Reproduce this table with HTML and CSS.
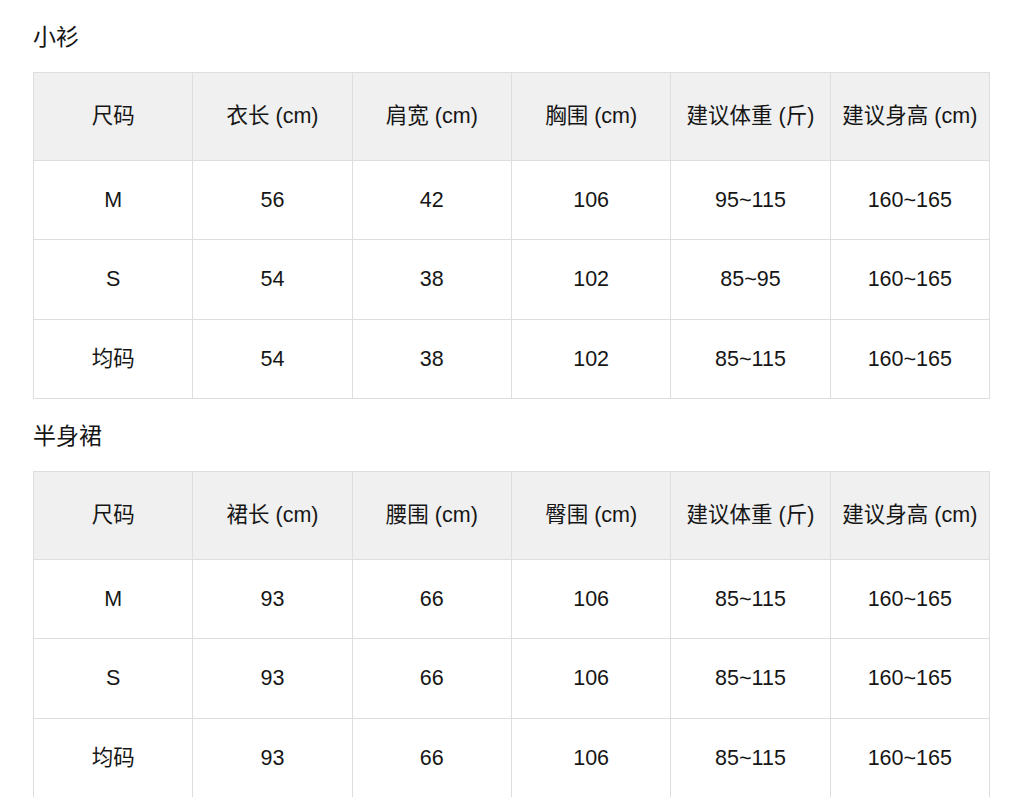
FILE: index.html
```html
<!DOCTYPE html>
<html lang="zh">
<head>
<meta charset="utf-8">
<link rel="stylesheet" href="styles.css">
</head>
<body>
<div class="page">
  <h2 class="title">小衫</h2>
  <table class="size-table">
    <thead>
      <tr><th>尺码</th><th>衣长 (cm)</th><th>肩宽 (cm)</th><th>胸围 (cm)</th><th>建议体重 (斤)</th><th>建议身高 (cm)</th></tr>
    </thead>
    <tbody>
      <tr><td>M</td><td>56</td><td>42</td><td>106</td><td>95~115</td><td>160~165</td></tr>
      <tr><td>S</td><td>54</td><td>38</td><td>102</td><td>85~95</td><td>160~165</td></tr>
      <tr><td>均码</td><td>54</td><td>38</td><td>102</td><td>85~115</td><td>160~165</td></tr>
    </tbody>
  </table>
  <h2 class="title">半身裙</h2>
  <table class="size-table">
    <thead>
      <tr><th>尺码</th><th>裙长 (cm)</th><th>腰围 (cm)</th><th>臀围 (cm)</th><th>建议体重 (斤)</th><th>建议身高 (cm)</th></tr>
    </thead>
    <tbody>
      <tr><td>M</td><td>93</td><td>66</td><td>106</td><td>85~115</td><td>160~165</td></tr>
      <tr><td>S</td><td>93</td><td>66</td><td>106</td><td>85~115</td><td>160~165</td></tr>
      <tr><td>均码</td><td>93</td><td>66</td><td>106</td><td>85~115</td><td>160~165</td></tr>
    </tbody>
  </table>
</div>
</body>
</html>
```
FILE: styles.css
```css
html, body {
  margin: 0;
  padding: 0;
  background: #fff;
}
body {
  font-family: "Liberation Sans", "Noto Sans CJK SC", sans-serif;
  color: #161616;
}
.page {
  padding: 0 34px 0 33px;
}
.title {
  margin: 0;
  padding: 22px 0 20px 0;
  height: 30px;
  line-height: 30px;
  font-size: 23px;
  font-weight: 400;
}
.size-table {
  width: 957px;
  border-collapse: collapse;
  table-layout: fixed;
  font-size: 21.5px;
}
.size-table th,
.size-table td {
  border: 1px solid #dedede;
  text-align: center;
  font-weight: 400;
  line-height: 30px;
  padding: 0;
}
.size-table th {
  background: #f0f0f0;
  height: 86.5px;
}
.size-table td {
  height: 78.5px;
}
```
